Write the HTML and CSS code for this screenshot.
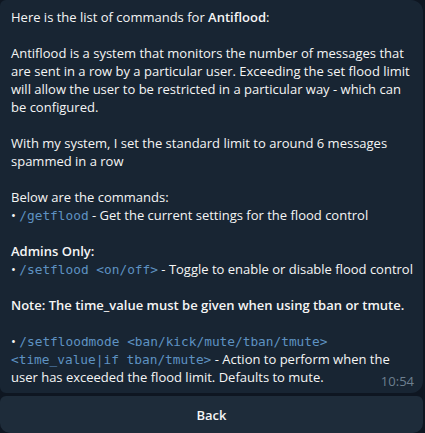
FILE: index.html
```html
<!DOCTYPE html>
<html>
<head>
<meta charset="utf-8">
<link rel="stylesheet" href="styles.css">
</head>
<body>
<div class="wrap">
  <div class="bubble">
    <p>Here is the list of commands for <b>Antiflood</b>:</p>
    <p>Antiflood is a system that monitors the number of messages that are sent in a row by a particular user. Exceeding the set flood limit will allow the user to be restricted in a particular way - which can be configured.</p>
    <p>With my system, I set the standard limit to around 6 messages spammed in a row</p>
    <p>Below are the commands:<br>• <code>/getflood</code> - Get the current settings for the flood control</p>
    <p><b>Admins Only:</b><br>• <code>/setflood &lt;on/off&gt;</code> - Toggle to enable or disable flood control</p>
    <p><b>Note: The time_value must be given when using tban or tmute.</b></p>
    <p class="last">• <code>/setfloodmode &lt;ban/kick/mute/tban/tmute&gt; &lt;time_value|if tban/tmute&gt;</code> - Action to perform when the user has exceeded the flood limit. Defaults to mute.<span class="time">10:54</span></p>
  </div>
  <div class="btn">Back</div>
</div>
</body>
</html>
```
FILE: styles.css
```css
html, body {
  margin: 0;
  padding: 0;
  background: #0e1621;
  width: 425px;
  height: 433px;
  overflow: hidden;
}
.wrap {
  display: flex;
  flex-direction: column;
  gap: 3px;
  width: 423px;
}
.bubble {
  background: #182533;
  border-radius: 6px 12px 12px 6px;
  padding: 8px 9px 3px 11px;
  color: #f5f5f5;
  font-family: "Open Sans", sans-serif;
  font-size: 13px;
  line-height: 18px;
}
.bubble p {
  margin: 0 0 18px 0;
}
.bubble p.last {
  margin: 0;
}
b {
  font-weight: 600;
}
code {
  font-family: "DejaVu Sans Mono", monospace;
  font-size: 12.8px;
  line-height: 14px;
  color: #5e92c2;
}
.time {
  float: right;
  color: #6d7f8f;
  font-size: 13px;
  line-height: 18px;
  margin-top: 4px;
}
.btn {
  background: #1e2c3a;
  height: 37px;
  border-radius: 6px 6px 10px 10px;
  color: #f5f5f5;
  font-family: "Open Sans", sans-serif;
  font-weight: 600;
  font-size: 13px;
  display: flex;
  align-items: center;
  justify-content: center;
}
```
